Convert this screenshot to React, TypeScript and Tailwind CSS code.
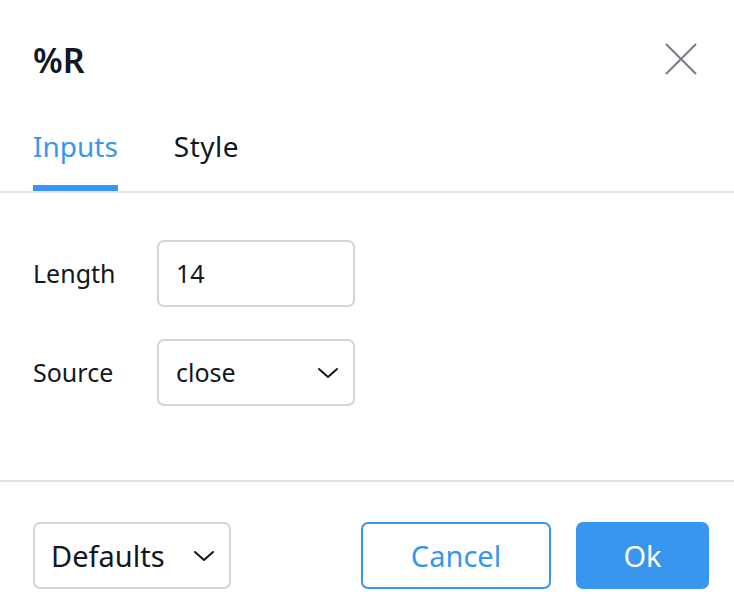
import * as React from "react";

function Chevron({ className }: { className?: string }) {
  return (
    <svg viewBox="0 0 22 12" className={className} fill="none" stroke="currentColor" strokeWidth="2" strokeLinecap="round" strokeLinejoin="round">
      <path d="M2 2l9 8 9-8" />
    </svg>
  );
}

export default function App() {
  return (
    <div className="w-[734px] h-[612px] bg-white flex flex-col text-[#131722]" style={{ fontFamily: '"Noto Sans", sans-serif' }}>
      {/* Header */}
      <div className="flex items-start justify-between pl-[33px] pr-[37px] pt-[43px] h-[100px] shrink-0">
        <h1 className="text-[34px] font-semibold leading-none">%R</h1>
        <button className="text-[#787b86]">
          <svg width="32" height="32" viewBox="0 0 32 32" stroke="currentColor" strokeWidth="2">
            <path d="M1 1l30 30M31 1 1 31" />
          </svg>
        </button>
      </div>

      {/* Tabs */}
      <div className="flex gap-[56px] px-[33px] border-b-2 border-[#e0e3eb] h-[93px] items-end shrink-0">
        <div className="flex flex-col">
          <span className="text-[28px] text-[#3896ee] leading-none pb-[25px]">Inputs</span>
          <span className="h-[6px] bg-[#3896ee] w-full" />
        </div>
        <div className="flex flex-col">
          <span className="text-[28px] leading-none pb-[31px] tracking-[0.5px]">Style</span>
        </div>
      </div>

      {/* Inputs */}
      <div className="flex flex-col gap-[32px] px-[33px] pt-[47px] h-[289px] border-b-2 border-[#e0e3eb] shrink-0">
        <div className="flex items-center">
          <span className="w-[124px] text-[25px]">Length</span>
          <div className="w-[198px] h-[67px] border-2 border-[#d1d4dc] rounded-[7px] flex items-center px-[17px] text-[25px]">14</div>
        </div>
        <div className="flex items-center">
          <span className="w-[124px] text-[25px]">Source</span>
          <div className="w-[198px] h-[67px] border-2 border-[#d1d4dc] rounded-[7px] flex items-center justify-between pl-[17px] pr-[14px] text-[25px]">
            <span>close</span>
            <Chevron className="w-[22px] h-[12px]" />
          </div>
        </div>
      </div>

      {/* Footer */}
      <div className="flex items-center justify-between pl-[33px] pr-[25px] pt-[40px]">
        <div className="w-[198px] h-[67px] border-2 border-[#d1d4dc] rounded-[7px] flex items-center justify-between pl-[16px] pr-[14px] text-[29px]">
          <span>Defaults</span>
          <Chevron className="w-[22px] h-[12px]" />
        </div>
        <div className="flex gap-[25px]">
          <button className="w-[190px] h-[67px] border-2 border-[#3896ee] rounded-[7px] text-[#3896ee] text-[29px]">Cancel</button>
          <button className="w-[133px] h-[67px] bg-[#3896ee] rounded-[7px] text-white text-[29px]">Ok</button>
        </div>
      </div>
    </div>
  );
}
